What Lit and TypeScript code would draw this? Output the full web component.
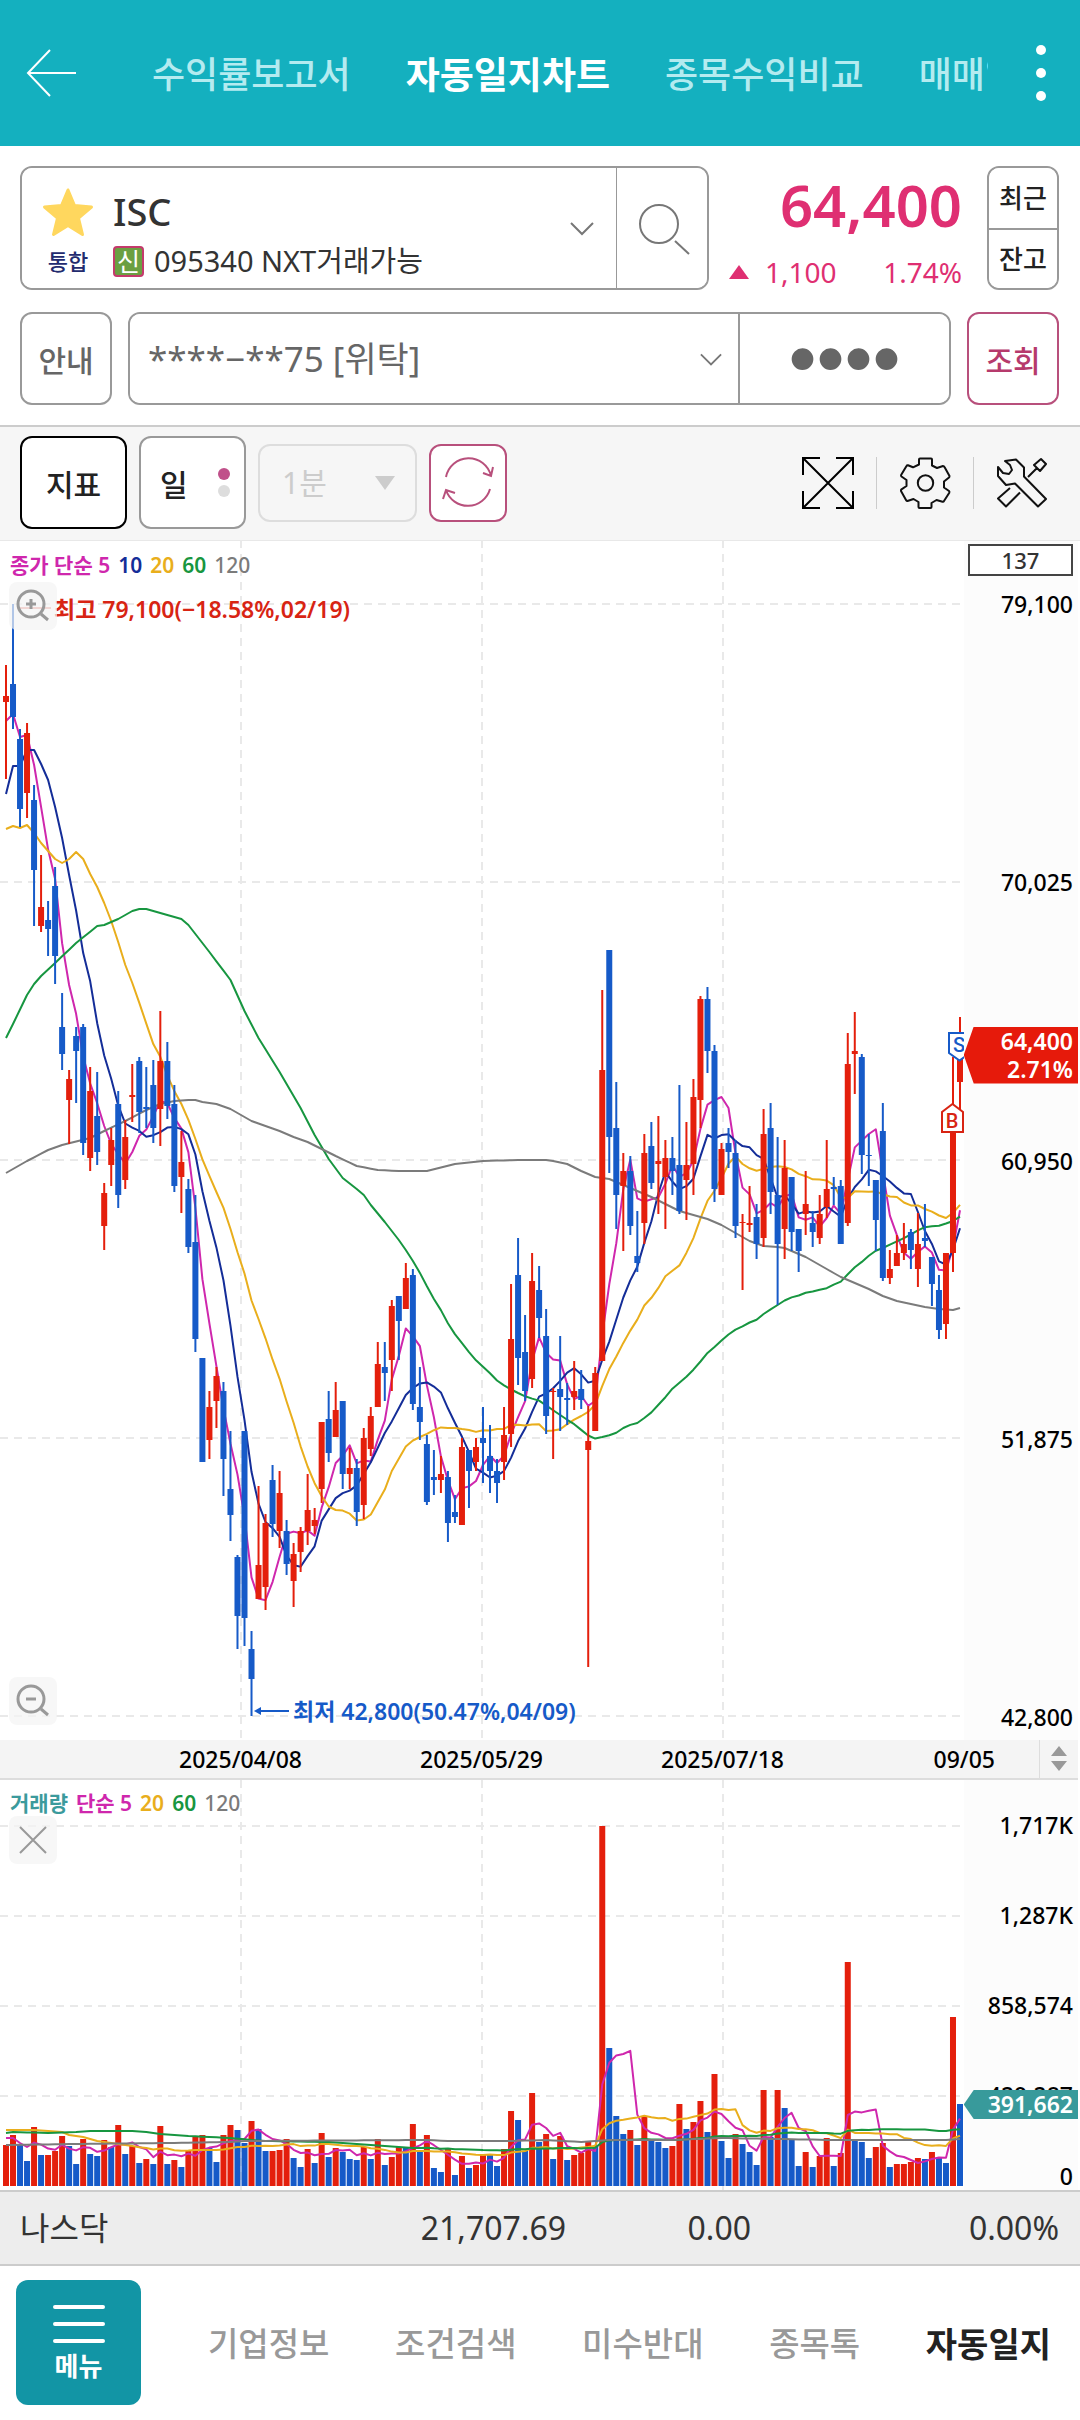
import { LitElement, html, css, svg } from "lit";
import { customElement } from "lit/decorators.js";
import { classMap } from "lit/directives/class-map.js";

const FONT = css`"Noto Sans", "Noto Sans CJK KR", sans-serif`;

/* Plot units: x runs 0..964 over 137 trading days, y grows downwards. */
const PLOT_WIDTH = 964;
const FIRST_X = 6;
const STEP = 954 / 136;
const GRID_X = [241, 482, 723];
const xAt = (i: number) => FIRST_X + STEP * i;

type Candle = [dir: "r" | "b", high: number, top: number, bottom: number, low: number];

const CANDLES: Candle[] = [
  ["r", 125, 156, 162, 239], ["b", 64, 144, 177, 189], ["b", 189, 199, 269, 287], ["r", 183, 193, 253, 278],
  ["b", 245, 260, 330, 386], ["r", 315, 367, 386, 392], ["b", 361, 380, 389, 416], ["b", 327, 346, 416, 444],
  ["b", 453, 487, 514, 530], ["r", 530, 539, 560, 604], ["b", 487, 496, 511, 563], ["b", 484, 487, 603, 615],
  ["r", 527, 551, 618, 631], ["b", 532, 576, 612, 625], ["r", 643, 653, 686, 710], ["r", 588, 600, 625, 646],
  ["b", 551, 564, 655, 668], ["r", 580, 597, 640, 649], ["r", 524, 555, 557, 582], ["b", 517, 521, 572, 593],
  ["b", 527, 567, 569, 588], ["b", 520, 545, 588, 603], ["r", 471, 521, 569, 606], ["b", 502, 521, 566, 579],
  ["b", 545, 564, 646, 652], ["r", 591, 622, 637, 673], ["b", 639, 649, 707, 713], ["b", 655, 702, 799, 812],
  ["b", 818, 818, 922, 922], ["r", 851, 867, 900, 919], ["r", 827, 836, 861, 888], ["b", 842, 851, 919, 956],
  ["b", 891, 949, 975, 1001], ["b", 1015, 1017, 1076, 1109], ["b", 891, 891, 1078, 1106], ["b", 1091, 1109, 1139, 1176],
  ["r", 946, 1025, 1059, 1059], ["r", 974, 983, 1047, 1070], ["b", 925, 940, 984, 997], ["r", 931, 953, 991, 1008],
  ["b", 980, 991, 1024, 1035], ["r", 1003, 1014, 1041, 1067], ["r", 987, 991, 1012, 1032], ["r", 934, 970, 991, 1005],
  ["r", 968, 980, 986, 994], ["r", 882, 882, 949, 963], ["b", 851, 879, 913, 922], ["r", 842, 870, 897, 897],
  ["b", 861, 861, 934, 949], ["r", 908, 928, 934, 949], ["b", 919, 928, 972, 986], ["r", 888, 898, 965, 979],
  ["r", 867, 876, 909, 916], ["r", 802, 824, 867, 867], ["b", 802, 827, 833, 861], ["r", 760, 766, 820, 851],
  ["b", 756, 756, 781, 820], ["r", 723, 738, 769, 769], ["b", 729, 735, 864, 870], ["b", 827, 867, 882, 900],
  ["b", 895, 904, 962, 965], ["b", 910, 937, 940, 955], ["r", 916, 934, 940, 953], ["b", 931, 937, 983, 1002],
  ["b", 955, 972, 977, 983], ["r", 898, 907, 985, 985], ["b", 910, 910, 931, 968], ["r", 898, 907, 922, 931],
  ["b", 867, 898, 903, 943], ["b", 885, 916, 931, 953], ["b", 919, 931, 943, 963], ["r", 867, 895, 922, 940],
  ["r", 744, 799, 894, 907], ["b", 698, 735, 818, 845], ["b", 775, 812, 851, 861], ["r", 713, 741, 839, 848],
  ["b", 726, 750, 778, 798], ["b", 769, 796, 876, 894], ["r", 848, 851, 852, 919], ["b", 796, 849, 857, 891],
  ["b", 843, 858, 860, 885], ["r", 821, 851, 857, 870], ["b", 830, 849, 860, 869], ["r", 866, 901, 910, 1127],
  ["r", 827, 833, 891, 891], ["r", 450, 530, 821, 821], ["b", 410, 410, 597, 633], ["b", 542, 588, 655, 689],
  ["r", 613, 631, 646, 711], ["b", 616, 631, 686, 695], ["b", 671, 716, 723, 732], ["r", 594, 613, 683, 704],
  ["b", 582, 606, 643, 649], ["r", 576, 621, 624, 674], ["r", 600, 618, 637, 689], ["b", 597, 618, 631, 655],
  ["b", 545, 625, 671, 674], ["r", 582, 625, 640, 680], ["r", 539, 557, 624, 655], ["r", 456, 459, 560, 588],
  ["b", 447, 459, 511, 533], ["b", 505, 511, 649, 662], ["r", 603, 609, 655, 655], ["b", 588, 603, 612, 628],
  ["b", 600, 613, 686, 698], ["r", 674, 682, 683, 750], ["r", 646, 683, 685, 692], ["b", 664, 677, 704, 719],
  ["r", 569, 594, 698, 707], ["b", 563, 588, 652, 674], ["b", 597, 655, 704, 765], ["r", 600, 628, 689, 719],
  ["b", 637, 637, 692, 711], ["b", 689, 689, 711, 732], ["r", 631, 664, 674, 695], ["b", 671, 683, 692, 707],
  ["r", 655, 674, 698, 704], ["r", 600, 649, 667, 678], ["b", 637, 647, 649, 665], ["b", 640, 646, 704, 704],
  ["r", 493, 524, 683, 686], ["r", 472, 511, 514, 554], ["b", 514, 517, 615, 634], ["b", 594, 615, 616, 646],
  ["b", 640, 640, 680, 711], ["b", 563, 591, 738, 741], ["r", 710, 729, 738, 744], ["r", 695, 713, 726, 726],
  ["r", 683, 704, 713, 720], ["b", 689, 692, 710, 729], ["r", 673, 704, 729, 747], ["b", 664, 698, 701, 707],
  ["b", 717, 717, 744, 766], ["b", 735, 750, 790, 799], ["r", 713, 713, 784, 799], ["r", 517, 590, 713, 732],
  ["r", 477, 514, 542, 570],
];

const VOLUMES =
  ("r41 r51 b41 b25 r59 b31 r31 r35 r50 b40 b22 r47 b32 b30 r46 b39 r61 b32 r40 b23 r27 b22 r60 b22 r26 b19 r35 " +
    "r49 r51 b38 b24 r51 r61 b56 b43 r65 b57 b35 r35 r36 r47 b28 b19 r37 b23 r53 b29 r38 b34 b27 b26 r39 b27 r47 " +
    "b21 r29 r39 b38 r62 b35 r51 b18 b14 r38 b11 r30 b18 r21 r32 b31 b20 r37 r75 b66 b35 r93 b44 r52 b27 r50 b26 " +
    "r31 r33 r45 b40 r360 b138 b70 b52 r56 b41 r70 b47 b44 b38 r40 r82 b57 r64 r85 b54 r112 b45 b28 r52 b42 b34 " +
    "b21 r96 b49 r96 b78 b47 b20 r34 b19 r30 r48 b20 r33 r224 b47 b44 b28 r39 r43 b19 r22 r22 r24 r28 b27 r34 b29 " +
    "b23 r169 b82").split(" ");
const VOLUME_DIRS = VOLUMES.map((v) => v[0]);
const VOLUME_VALUES = VOLUMES.map((v) => Number(v.slice(1)));

type Anchor = [index: number, value: number];

/** Expands sparse anchors to one value per day. */
function interpolate(anchors: Anchor[]): number[] {
  const out: number[] = [];
  for (let a = 0; a < anchors.length - 1; a++) {
    const [i0, v0] = anchors[a];
    const [i1, v1] = anchors[a + 1];
    for (let i = i0; i < i1; i++) out.push(v0 + ((v1 - v0) * (i - i0)) / (i1 - i0));
  }
  out.push(anchors[anchors.length - 1][1]);
  return out;
}

/** Simple moving average; days before the first full window come from the anchors. */
function movingAverage(values: number[], span: number, lead: Anchor[]): number[] {
  const out = interpolate(lead);
  for (let i = out.length; i < values.length; i++) {
    let sum = 0;
    for (let k = i - span + 1; k <= i; k++) sum += values[k];
    out.push(sum / span);
  }
  return out;
}

const CLOSES = CANDLES.map(([dir, , top, bottom]) => (dir === "r" ? top : bottom));

const PRICE_LINES: [string, number[]][] = [
  ["ma5", movingAverage(CLOSES, 5, [[0, 181], [1, 174], [2, 197], [3, 195]])],
  ["ma10", movingAverage(CLOSES, 10, [[0, 254], [1, 226], [2, 226], [3, 210], [4, 210], [5, 224], [6, 240], [7, 267], [8, 298]])],
  ["ma20", movingAverage(CLOSES, 20, [[0, 289], [1, 286], [2, 288], [3, 285], [4, 293], [5, 303], [6, 311], [7, 319], [8, 323],
    [9, 319], [10, 312], [11, 319], [12, 334], [13, 347], [14, 363], [15, 381], [16, 402], [17, 425], [18, 443]])],
  ["ma60", movingAverage(CLOSES, 60, [[0, 498], [1, 484], [3, 455], [4, 444], [5, 436], [7, 423], [10, 403], [13, 386], [14, 385],
    [16, 379], [18, 371], [19, 369], [20, 369], [22, 373], [23, 375], [25, 379], [26, 385], [29, 412], [32, 440], [34, 471],
    [36, 498], [39, 532], [42, 568], [44, 595], [46, 619], [48, 638], [50, 649], [51, 655], [52, 665], [54, 682], [56, 700],
    [57, 710], [58, 721]])],
  ["ma120", interpolate([[0, 633], [3, 621], [6, 610], [8, 605], [12, 598], [14, 591], [17, 581], [20, 570], [22, 564], [24, 561],
    [26, 560], [27, 560], [28, 562], [30, 564], [32, 569], [35, 581], [37, 586], [39, 591], [41, 597], [43, 602], [45, 609],
    [47, 616], [50, 626], [53, 630], [56, 631], [60, 631], [64, 624], [68, 621], [73, 620], [77, 620], [78, 621], [80, 624],
    [82, 631], [84, 637], [85, 638], [86, 639], [89, 648], [92, 657], [94, 664], [96, 671], [98, 675], [100, 679], [102, 685],
    [104, 693], [106, 701], [108, 706], [110, 707], [111, 708], [114, 717], [119, 737], [121, 743], [123, 749], [125, 756],
    [127, 761], [129, 764], [131, 767], [133, 769], [135, 770], [136, 768]])],
];

const VOLUME_LINES: [string, number[]][] = [
  ["ma5", movingAverage(VOLUME_VALUES, 5, [[0, 48], [1, 48], [2, 43], [3, 39]])],
  ["ma20", movingAverage(VOLUME_VALUES, 20, [[0, 56], [4, 56], [6, 55], [8, 54], [9, 51], [11, 49], [13, 45], [14, 44], [16, 42], [18, 40]])],
  ["ma60", movingAverage(VOLUME_VALUES, 60, [[0, 53], [1, 54], [6, 53], [10, 54], [12, 55], [18, 55], [20, 54], [22, 52], [26, 50],
    [29, 49], [32, 48], [35, 46], [37, 45], [46, 44], [50, 42], [54, 40], [58, 38]])],
  ["ma120", interpolate([[0, 41], [10, 42], [23, 43], [32, 44], [34, 45], [60, 46], [63, 45], [72, 45], [77, 46], [82, 44], [86, 46],
    [95, 46], [102, 48], [110, 47], [118, 46], [134, 46], [136, 47]])],
];

const points = (values: number[], map: (v: number) => number) =>
  values.map((v, i) => `${xAt(i).toFixed(1)},${map(v).toFixed(1)}`).join(" ");

const gridLines = (height: number, rows: number[]) => svg`
  ${rows.map((y) => svg`<line class="grid" x1="0" x2=${PLOT_WIDTH} y1=${y} y2=${y}></line>`)}
  ${GRID_X.map((x) => svg`<line class="grid" x1=${x} x2=${x} y1="0" y2=${height}></line>`)}`;

const chartStyles = css`
  :host { display: block; font-family: ${FONT}; }
  .chart { display: grid; grid-template-columns: 964fr 114fr; position: relative; margin-right: 2px; background: #fff; }
  .plot { display: block; width: 100%; height: auto; overflow: visible; }
  .grid { stroke: #e9e9e9; stroke-width: 2; stroke-dasharray: 8 6; }
  .r { fill: #e41f0c; stroke: #e41f0c; }
  .b { fill: #165ac8; stroke: #165ac8; }
  .body { stroke: none; }
  .wick { stroke-width: 2; }
  .line { fill: none; stroke-width: 2; stroke-linejoin: round; }
  .line.ma5 { stroke: #cf27ad; }
  .line.ma10 { stroke: #142d98; }
  .line.ma20 { stroke: #e9ae1c; }
  .line.ma60 { stroke: #179640; }
  .line.ma120 { stroke: #7b7b7b; }
  .legend { position: absolute; left: 10px; display: flex; gap: 8px; margin: 0; font-size: 21px; line-height: 24px; font-weight: 600; }
  .legend .ma5 { color: #cf27ad; }
  .legend .ma10 { color: #142d98; }
  .legend .ma20 { color: #e9ae1c; }
  .legend .ma60 { color: #179640; }
  .legend .ma120 { color: #7b7b7b; font-weight: 500; }
  .legend .vol { color: #3b9a9c; }
  .tool { position: absolute; left: 9px; width: 48px; height: 48px; padding: 0; border: 0; border-radius: 8px; background: rgba(244, 244, 244, 0.7); }
  .tool svg { display: block; width: 48px; height: 48px; fill: none; stroke: #999; stroke-width: 3; }
  .axis { display: flex; flex-direction: column; background: #fcfcfc; color: #000; font-size: 23px; line-height: 24px; font-weight: 500; text-align: right; }
  .tag { position: absolute; left: 89.4%; right: 0; box-sizing: border-box; padding-right: 5px; color: #fff; font-size: 23px; font-weight: 600; text-align: right; }
`;

@customElement("price-chart")
export class PriceChart extends LitElement {
  static styles = [
    chartStyles,
    css`
      .legend { top: 12px; }
      .zoom-in { top: 41px; }
      .zoom-out { bottom: 15px; }
      .count { box-sizing: border-box; height: 32px; margin: 3px 5px 0 4px; border: 2px solid #444; background: #fff; color: #333; font-size: 22px; line-height: 28px; text-align: center; }
      .labels { flex: 1; display: flex; flex-direction: column; justify-content: space-between; padding: 16px 5px 11px 0; }
      .tag { top: 40.5%; height: 57px; line-height: 28px; background: #e61a0b; clip-path: polygon(10px 0, 100% 0, 100% 100%, 10px 100%, 0 50%); }
      .note { font-size: 23px; font-weight: 600; }
      .note.high { fill: #d82413; }
      .note.low { fill: #165ac8; }
      .arrow-high { stroke: #d82413; stroke-width: 1; }
      .arrow-low { stroke: #165ac8; stroke-width: 2; }
      .head-low { fill: #165ac8; }
      .flag { fill: #fff; stroke-width: 2; }
      .flag.buy { stroke: #d82413; }
      .flag.sell { stroke: #165ac8; }
      .mark { font-family: Roboto, sans-serif; font-size: 20px; font-weight: 500; text-anchor: middle; }
      .mark.buy { fill: #d82413; }
      .mark.sell { fill: #165ac8; }
    `,
  ];

  render() {
    return html`
      <section class="chart" aria-label="가격 차트">
        <svg class="plot" viewBox="0 1 964 1199">
          ${gridLines(1200, [64, 342, 620, 898, 1176])}
          ${PRICE_LINES.map(([name, values]) => svg`<polyline class="line ${name}" points=${points(values, (v) => v)}></polyline>`)}
          ${CANDLES.map(([dir, high, top, bottom, low], i) => svg`
            <line class="wick ${dir}" x1=${xAt(i)} x2=${xAt(i)} y1=${high} y2=${low}></line>
            <rect class="body ${dir}" x=${xAt(i) - 3} y=${top} width="6" height=${bottom - top}></rect>`)}
          <line class="arrow-high" x1="17" x2="51" y1="68" y2="68"></line>
          <text class="note high" x="54" y="78">최고 79,100(−18.58%,02/19)</text>
          <line class="arrow-low" x1="258" x2="289" y1="1171" y2="1171"></line>
          <path class="head-low" d="M254 1171l7-4v8z"></path>
          <text class="note low" x="293" y="1180">최저 42,800(50.47%,04/09)</text>
          <path class="flag sell" d="M949 493h21v20l-10.500 7.500-10.500-7.500z"></path>
          <text class="mark sell" x="959" y="512">S</text>
          <path class="flag buy" d="M942 592v-20l10.500-8 10.500 8v20z"></path>
          <text class="mark buy" x="952" y="588">B</text>
        </svg>
        <div class="axis">
          <div class="count">137</div>
          <div class="labels">
            <span>79,100</span><span>70,025</span><span>60,950</span><span>51,875</span><span>42,800</span>
          </div>
        </div>
        <p class="legend">
          <span class="ma5">종가 단순 5</span><span class="ma10">10</span><span class="ma20">20</span><span class="ma60">60</span><span class="ma120">120</span>
        </p>
        <button class="tool zoom-in" aria-label="확대">
          <svg viewBox="0 0 48 48"><circle cx="22" cy="22" r="13"></circle><path d="M32 32l7 6M17 22h10M22 17v10"></path></svg>
        </button>
        <button class="tool zoom-out" aria-label="축소">
          <svg viewBox="0 0 48 48"><circle cx="22" cy="22" r="13"></circle><path d="M32 32l7 6M17 22h10"></path></svg>
        </button>
        <div class="tag">64,400<br />2.71%</div>
      </section>`;
  }
}

@customElement("volume-chart")
export class VolumeChart extends LitElement {
  static styles = [
    chartStyles,
    css`
      .legend { top: 11px; }
      .close { top: 36px; }
      .close svg { stroke-width: 2; }
      .axis { display: grid; grid-template-rows: 90fr 90fr 90fr 90fr 50fr; align-items: center; padding-right: 5px; }
      .zero { align-self: end; padding-bottom: 2px; }
      .tag { top: 75.6%; height: 29px; line-height: 29px; background: #389a9b; clip-path: polygon(10px 0, 100% 0, 100% 100%, 10px 100%, 0 50%); }
    `,
  ];

  render() {
    return html`
      <section class="chart" aria-label="거래량 차트">
        <svg class="plot" viewBox="0 0 964 410">
          ${gridLines(410, [46, 136, 226, 316])}
          ${VOLUME_VALUES.map((v, i) => svg`<rect class="body ${VOLUME_DIRS[i]}" x=${xAt(i) - 3} y=${406 - v} width="6" height=${v}></rect>`)}
          ${VOLUME_LINES.map(([name, values]) => svg`<polyline class="line ${name}" points=${points(values, (v) => 406 - v)}></polyline>`)}
        </svg>
        <div class="axis">
          <span>1,717K</span><span>1,287K</span><span>858,574</span><span>429,287</span><span class="zero">0</span>
        </div>
        <p class="legend">
          <span class="vol">거래량</span><span class="ma5">단순 5</span><span class="ma20">20</span><span class="ma60">60</span><span class="ma120">120</span>
        </p>
        <button class="tool close" aria-label="닫기">
          <svg viewBox="0 0 48 48"><path d="M11 11l26 26M37 11L11 37"></path></svg>
        </button>
        <div class="tag">391,662</div>
      </section>`;
  }
}

const TABS = ["수익률보고서", "자동일지차트", "종목수익비교", "매매일지"];
const NAV = ["기업정보", "조건검색", "미수반대", "종목톡", "자동일지"];

@customElement("app-root")
export class AppRoot extends LitElement {
  static styles = css`
    :host { display: block; background: #fff; color: #333; font-family: ${FONT}; }
    button, select, input { box-sizing: border-box; margin: 0; padding: 0; font-family: inherit; color: inherit; background: #fff; }
    svg { display: block; fill: none; }

    .top { display: flex; align-items: center; height: 146px; background: #14b0bf; }
    .back { flex: none; width: 102px; height: 80px; padding-left: 26px; border: 0; background: none; }
    .tabs { flex: 1; min-width: 0; display: flex; gap: 55px; padding: 4px 0 0 50px; overflow: hidden; white-space: nowrap; }
    .tab { color: #b4ebf0; font-size: 36px; line-height: 48px; font-weight: 500; text-decoration: none; }
    .tab.active { color: #fff; font-size: 37px; font-weight: 700; }
    .more { flex: none; width: 92px; height: 80px; border: 0; background: none; padding-left: 47px; }
    .more svg { fill: #fff; }

    .query { display: grid; gap: 22px; padding: 20px 21px 20px 20px; }
    .row { display: flex; }
    .box { display: flex; box-sizing: border-box; border: 2px solid #999; border-radius: 12px; overflow: hidden; background: #fff; }
    .stock { flex: 1; height: 124px; }
    .pick { flex: 1; display: grid; grid-template-columns: 49px 1fr 24px; align-items: center; column-gap: 22px; padding: 0 22px 0 20px; border: 0; text-align: left; }
    .side { display: grid; justify-items: center; row-gap: 8px; padding-top: 8px; }
    .star { fill: #ffd75e; stroke: #ffd75e; }
    .market { color: #232b6e; font-size: 22px; line-height: 32px; font-weight: 500; }
    .label { padding-top: 10px; }
    .name { display: block; font-size: 38px; line-height: 48px; font-weight: 500; }
    .detail { display: flex; align-items: center; gap: 10px; font-size: 29px; line-height: 36px; margin-top: 8px; white-space: nowrap; }
    .credit { box-sizing: border-box; width: 31px; height: 31px; border: 2px solid #c43a6c; border-radius: 4px; background: #6b9f42; color: #fff; font-size: 25px; line-height: 26px; text-align: center; }
    .find { width: 91px; border: 0; border-left: 1px solid #999; padding-left: 18px; }
    .quote { box-sizing: border-box; width: 278px; padding: 0 25px 0 20px; color: #df2f72; display: grid; align-content: start; }
    .price { margin: 4px 0 0; font-size: 58px; line-height: 70px; font-weight: 600; text-align: right; }
    .change { display: flex; align-items: center; font-size: 28px; line-height: 36px; margin: 14px 0 0; }
    .change .rate { margin-left: auto; }
    .up { width: 20px; height: 14px; margin-right: 16px; fill: #df2f72; }
    .lists { display: grid; grid-template-rows: 1fr 1fr; width: 72px; }
    .lists button { border: 0; font-size: 26px; line-height: 32px; font-weight: 500; color: #222; }
    .lists button + button { border-top: 2px solid #999; }
    .second { gap: 16px; height: 93px; }
    .side-btn { width: 92px; border: 2px solid #999; border-radius: 12px; font-size: 30px; font-weight: 500; color: #666; }
    .side-btn.go { border-color: #b8507c; color: #b63a6c; }
    .account { flex: 1; }
    .acct-wrap { flex: 608; display: grid; grid-template-columns: 1fr 24px; align-items: center; padding-right: 14px; }
    .acct { grid-area: 1 / 1 / 2 / 3; width: 100%; height: 89px; padding-left: 18px; border: 0; appearance: none; color: #666; font-size: 35px; }
    .acct-wrap svg { grid-area: 1 / 2; pointer-events: none; }
    .pin { flex: 214; min-width: 0; width: 0; border: 0; border-left: 2px solid #999; color: #666; font-family: "Liberation Sans", sans-serif; font-size: 80px; text-align: center; }

    .tools { display: flex; align-items: center; box-sizing: border-box; height: 116px; padding: 0 32px 2px 20px; border-top: 2px solid #ccc; border-bottom: 1px solid #e8e8e8; background: #f6f6f6; }
    .key { height: 93px; width: 107px; margin-right: 12px; border: 2px solid #000; border-radius: 12px; color: #222; font-size: 30px; font-weight: 500; }
    .key.day { display: flex; align-items: center; justify-content: space-between; padding: 0 14px 0 19px; border-color: #999; }
    .minute { display: grid; grid-template-columns: 1fr 42px; align-items: center; width: 159px; margin-right: 12px; }
    .minute select { grid-area: 1 / 1 / 2 / 3; width: 159px; height: 78px; padding-left: 22px; border: 2px solid #ddd; border-radius: 12px; background: #f6f6f6; color: #ccc; opacity: 1; appearance: none; font-size: 30px; }
    .minute svg { grid-area: 1 / 2; fill: #ccc; pointer-events: none; }
    .refresh { width: 78px; height: 78px; padding: 0 11px; border: 2px solid #b8507c; border-radius: 12px; }
    .icons { display: flex; align-items: center; margin-left: auto; }
    .icon { width: 52px; height: 52px; border: 0; background: none; }
    .icons i { width: 1px; height: 52px; margin: 0 22px; background: #ccc; }

    .dates { display: grid; grid-template-columns: 241fr 241fr 241fr 152fr 44fr 39fr; align-items: center; height: 40px; margin-right: 2px; padding-left: 120px; box-sizing: border-box; background: #f4f4f4; border-bottom: 2px solid #ddd; color: #000; font-size: 23px; font-weight: 500; text-align: center; }
    .dates .last { text-align: right; }
    .spin { grid-column: 6; height: 38px; border: 0; border-left: 1px solid #ddd; background: none; }
    .spin svg { margin: 0 auto; fill: #999; }

    .index { display: grid; grid-template-columns: 546fr 185fr 308fr; align-items: center; box-sizing: border-box; height: 76px; padding: 0 21px 0 20px; border-top: 2px solid #ccc; border-bottom: 2px solid #ccc; background: #ededed; font-size: 32px; line-height: 40px; text-align: right; }
    .pair { display: flex; justify-content: space-between; }

    .nav { display: flex; align-items: center; padding: 14px 29px 15px 16px; }
    .menu { flex: none; display: grid; justify-items: center; align-content: center; row-gap: 4px; width: 125px; height: 125px; border: 0; border-radius: 12px; background: #1295a5; color: #fff; font-size: 26px; line-height: 32px; font-weight: 700; }
    .links { flex: 1; display: flex; justify-content: space-between; align-items: center; padding: 2px 0 0 67px; }
    .link { color: #999; font-size: 33px; line-height: 40px; font-weight: 500; text-decoration: none; }
    .link.active { color: #222; font-size: 34px; font-weight: 700; }
  `;

  private chevron(size: number) {
    return html`<svg width=${size} height=${size} viewBox="0 0 24 24" stroke="#777" stroke-width="2"><path d="M1 7l11 11L23 7"></path></svg>`;
  }

  render() {
    return html`
      <header class="top">
        <button class="back" aria-label="뒤로">
          <svg width="52" height="48" viewBox="0 0 52 48" stroke="#fff" stroke-width="2"><path d="M24 1L2 24l22 23M2 24h48"></path></svg>
        </button>
        <nav class="tabs">
          ${TABS.map((t, i) => html`<a href="#" class=${classMap({ tab: true, active: i === 1 })}>${t}</a>`)}
        </nav>
        <button class="more" aria-label="더보기">
          <svg width="12" height="56" viewBox="0 0 12 56"><circle cx="6" cy="5" r="5"></circle><circle cx="6" cy="28" r="5"></circle><circle cx="6" cy="51" r="5"></circle></svg>
        </button>
      </header>

      <section class="query">
        <div class="row">
          <div class="box stock">
            <button class="pick" aria-label="종목 선택">
              <span class="side">
                <svg class="star" width="52" height="50" viewBox="0 0 52 50" stroke-width="3" stroke-linejoin="round"><path d="M26 3l6.500 15.500 17 1.500-13 11 4 16.500-14.500-9-14.500 9 4-16.500-13-11 17-1.500z"></path></svg>
                <span class="market">통합</span>
              </span>
              <span class="label">
                <span class="name">ISC</span>
                <span class="detail"><span class="credit">신</span>095340 NXT거래가능</span>
              </span>
              ${this.chevron(24)}
            </button>
            <button class="find" aria-label="종목 검색">
              <svg width="56" height="56" viewBox="0 0 56 56" stroke="#777" stroke-width="2"><circle cx="24" cy="24" r="19"></circle><path d="M40 41l14 13"></path></svg>
            </button>
          </div>
          <div class="quote">
            <p class="price">64,400</p>
            <p class="change">
              <svg class="up" viewBox="0 0 20 14"><path d="M10 0l10 14H0z"></path></svg>
              <span>1,100</span><span class="rate">1.74%</span>
            </p>
          </div>
          <div class="box lists"><button>최근</button><button>잔고</button></div>
        </div>
        <div class="row second">
          <button class="side-btn">안내</button>
          <div class="box account">
            <div class="acct-wrap">
              <select class="acct" aria-label="계좌"><option>****−**75 [위탁]</option></select>
              ${this.chevron(22)}
            </div>
            <input class="pin" type="password" aria-label="비밀번호" value="0000" />
          </div>
          <button class="side-btn go">조회</button>
        </div>
      </section>

      <section class="tools">
        <button class="key">지표</button>
        <button class="key day">
          일
          <svg width="12" height="30" viewBox="0 0 12 30"><circle cx="6" cy="6" r="6" fill="#c0508a"></circle><circle cx="6" cy="23" r="6" fill="#ddd"></circle></svg>
        </button>
        <div class="minute">
          <select disabled aria-label="분 단위"><option>1분</option></select>
          <svg width="20" height="14" viewBox="0 0 20 14"><path d="M0 0h20L10 14z"></path></svg>
        </div>
        <button class="refresh" aria-label="새로고침">
          <svg width="52" height="52" viewBox="0 0 52 52" stroke="#b8507c" stroke-width="2"><path d="M4 20a23 23 0 0 1 45-1M41 16l8 3 2-9M48 32a23 23 0 0 1-44 1M1 42l3-9 9 3"></path></svg>
        </button>
        <div class="icons">
          <button class="icon" aria-label="전체화면">
            <svg width="52" height="52" viewBox="0 0 52 52" stroke="#000" stroke-width="2"><path d="M18 1H1v17M34 1h17v17M1 34v17h17M51 34v17H34M1 1l50 50M51 1L1 51"></path></svg>
          </button>
          <i></i>
          <button class="icon" aria-label="설정">
            <svg width="52" height="52" viewBox="0 0 52 52" stroke="#111" stroke-width="2" stroke-linejoin="round"><path d="M20 2.500q0-1 1-1h11q1 0 1 1v6l5 2.500 6-2q1 0 1.500 1l5 9q0 1-.5 1.500l-5 4v6l5 3.500q.7.700.3 1.700l-5.300 8.300q-.5 1-1.500.7l-6-1.700-5 3v4q0 1-1 1h-11q-1 0-1-1v-5l-5-3-6 2q-1 0-1.500-1l-5-9q-.3-1 .5-1.700l5-3.300v-6l-5-3.500q-.7-.7-.4-1.500l5.400-9q.5-1 1.500-.7l5 2 6-2.800z"></path><circle cx="26.500" cy="26" r="7.700"></circle></svg>
          </button>
          <i></i>
          <button class="icon" aria-label="도구">
            <svg width="52" height="52" viewBox="0 0 52 52" stroke="#111" stroke-width="2" stroke-linejoin="round"><path d="M9 4l11-1.500 8 8v9L50 42l-8 7.500L19 26.500l-9 1.500-8-9v-9l5 6 6 1 3-4-2-5zM32 20l9-9M38 8l7-6 5 5-6 7zM14 31L2 41.500 10 49.500 24 35.500"></path></svg>
          </button>
        </div>
      </section>

      <price-chart></price-chart>

      <div class="dates">
        <span>2025/04/08</span><span>2025/05/29</span><span>2025/07/18</span><span class="last">09/05</span>
        <button class="spin" aria-label="차트 크기">
          <svg width="16" height="26" viewBox="0 0 16 26"><path d="M8 0l8 10H0zM0 15h16L8 25z"></path></svg>
        </button>
      </div>

      <volume-chart></volume-chart>

      <section class="index">
        <span class="pair"><span>나스닥</span><span>21,707.69</span></span>
        <span>0.00</span>
        <span>0.00%</span>
      </section>

      <footer class="nav">
        <button class="menu">
          <svg width="52" height="42" viewBox="0 0 52 42" stroke="#fff" stroke-width="4" stroke-linecap="round"><path d="M2 3h48M2 20h48M2 37h48"></path></svg>
          메뉴
        </button>
        <nav class="links">
          ${NAV.map((t, i) => html`<a href="#" class=${classMap({ link: true, active: i === 4 })}>${t}</a>`)}
        </nav>
      </footer>
    `;
  }
}
